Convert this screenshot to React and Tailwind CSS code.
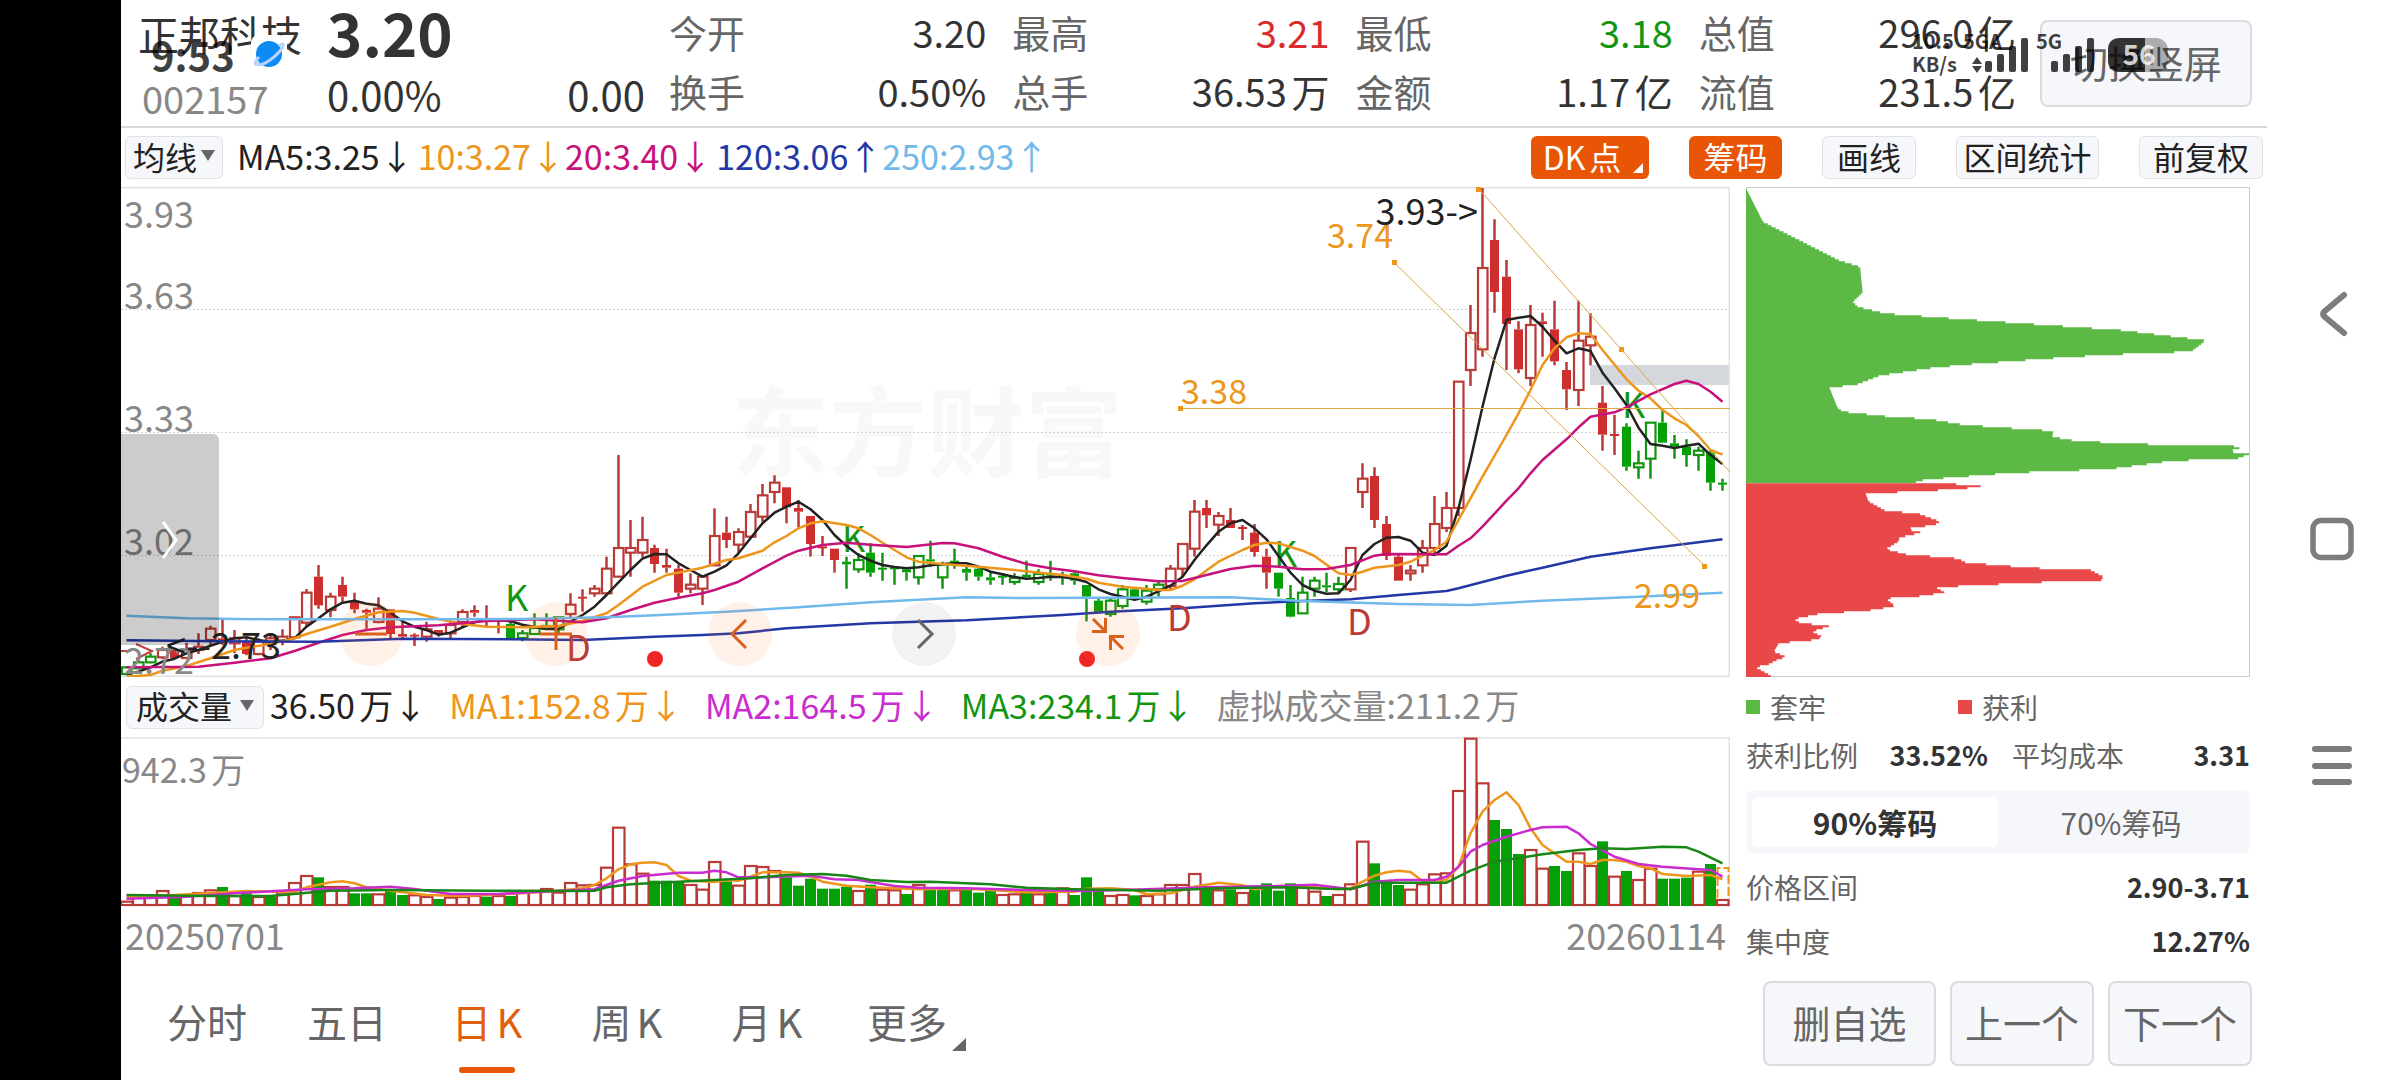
import React from "react";

const STEP = 12;
const FIRST = 5.5;
const cx = (i) => FIRST + STEP * i;

/* Candles: kind, high, body top, body bottom, low (thirds of a unit). r/g hollow, R/G filled. */
const CANDLES = `g 742 742 762 762,g 720 727 745 745,g 700 710 727 730,r 680 690 712 718,R 690 690 714 714,r 668 690 714 716,r 640 680 690 702,r 617 626 660 680,R 600 655 665 675,r 630 655 670 700,R 655 665 702 706,r 655 665 702 706,r 640 655 672 690,r 628 650 662 676,r 592 592 652 652,r 507 518 608 620,R 435 470 556 566,r 518 530 570 592,R 470 495 530 545,R 518 545 568 580,R 566 570 578 626,r 532 566 606 610,R 568 568 642 655,R 600 642 650 660,R 640 644 648 678,r 605 628 650 665,R 630 630 642 650,r 605 615 640 656,r 568 576 606 622,R 556 570 578 590,R 556 600 606 618,R 600 600 606 640,G 605 612 654 656,g 630 640 654 664,g 580 624 642 642,g 580 618 626 626,g 592 592 628 640,r 520 554 582 592,R 508 530 534 575,r 495 506 520 530,r 410 446 520 520,r 105 384 470 470,r 300 384 398 470,r 290 360 398 412,R 374 384 432 458,R 386 435 443 458,R 435 446 518 530,r 460 494 506 520,r 470 470 506 555,r 265 348 436 436,R 290 338 360 384,r 325 336 374 400,r 252 276 350 350,r 192 226 290 305,r 166 188 216 250,R 202 202 262 310,R 240 264 275 322,R 288 288 372 410,R 348 379 384 408,R 386 386 420 458,G 410 425 433 506,g 400 420 448 458,G 370 398 458 470,G 398 443 448 482,G 440 442 446 494,G 448 448 457 482,g 408 408 472 494,G 362 418 424 440,g 425 434 472 506,G 386 422 428 446,G 440 447 458 482,G 440 446 470 482,G 455 472 481 494,G 460 467 472 494,g 460 474 486 494,G 422 464 472 472,g 448 462 486 494,G 422 461 466 482,G 455 466 470 494,G 455 460 482 494,G 495 495 530 604,G 535 542 576 580,g 535 542 582 590,g 495 508 558 566,G 505 508 532 540,g 495 512 545 554,g 485 494 508 530,r 435 446 498 510,r 370 372 446 470,r 240 275 386 410,R 240 264 286 324,r 276 288 314 348,R 264 300 324 324,R 315 321 326 360,R 312 338 396 410,R 386 410 458 506,G 458 458 506 530,G 495 534 590 592,g 470 518 580 580,g 470 482 506 530,G 458 496 502 516,g 470 492 508 520,r 384 384 508 516,r 130 176 216 264,R 142 168 300 324,R 288 312 408 420,R 400 410 482 482,r 435 452 460 482,r 360 384 436 458,r 228 312 384 400,r 216 264 324 336,r -115 -115 264 288,r -345 -261 -150 -102,r -696 -456 -212 -190,R -602 -540 -384 -322,R -480 -430 -288 -150,R -296 -272 -152 -140,r -345 -285 -126 -102,R -322 -296 -288 -190,R -358 -272 -176 -164,R -174 -150 -92 -30,r -358 -238 -90 -42,r -320 -250 -224 -164,R -102 -52 44 92,R -16 42 46 105,G 10 20 140 152,g 92 130 142 176,g 8 8 116 176,G -28 8 68 68,G 45 70 80 116,G 58 80 105 140,g 80 92 105 152,G 90 98 188 212,G 176 188 193 212`
  .split(",")
  .map((s) => {
    const [kind, ...v] = s.split(" ");
    return [kind, ...v.map((n) => 233 + Number(n) / 3)];
  });

const MA_LINES = [
  ["#222222", "0 762 1 755 2 742 3 725 4 716 5 700 6 690 7 677 8 665 9 655 10 652 11 660 12 666 13 662 14 655 15 620 16 595 17 568 18 548 19 542 20 551 21 556 22 578 23 604 24 620 25 630 26 644 27 638 28 622 29 607 30 600 31 600 32 604 33 614 34 621 35 627 36 627 37 605 38 585 39 560 40 525 41 487 42 450 43 416 44 402 45 403 46 430 47 450 48 470 49 455 50 436 51 400 52 355 53 310 54 278 55 260 56 245 57 268 58 300 59 345 60 378 61 405 62 422 63 435 64 441 65 445 66 442 67 436 68 432 69 430 70 430 71 440 72 455 73 463 74 471 75 476 76 474 77 470 78 471 79 476 80 486 81 508 82 522 83 530 84 539 85 530 86 514 87 497 88 470 89 420 90 376 91 335 92 310 93 300 94 325 95 358 96 408 97 458 98 495 99 512 100 521 101 520 102 480 103 405 104 372 105 353 106 351 107 362 108 398 109 405 110 377 111 265 112 120 113 -40 114 -185 115 -300 116 -307 117 -312 118 -280 119 -238 120 -200 121 -215 122 -207 123 -142 124 -95 125 -45 126 23 127 72 128 77 129 84 130 77 131 71 132 105 133 132"],
  ["#ed961b", "0 770 2 765 3 752 5 738 7 715 9 690 10 683 12 672 14 655 15 642 17 620 19 597 21 577 23 573 24 578 26 597 28 612 30 620 33 622 36 618 38 603 40 580 41 555 43 500 45 465 48 443 50 420 51 415 53 392 54 367 55 348 56 325 57 310 58 304 60 315 61 325 62 345 63 368 65 412 66 425 68 432 71 440 74 450 78 465 80 476 81 488 83 500 86 510 87 510 88 497 89 478 91 425 93 390 94 375 95 368 96 370 98 392 99 408 101 460 102 465 103 455 104 443 106 435 107 425 109 390 110 365 111 300 112 235 113 170 115 45 116 -20 117 -90 118 -165 119 -215 120 -248 121 -260 122 -258 123 -210 125 -122 126 -88 127 -65 128 -30 129 -5 130 15 131 48 132 90 133 104"],
  ["#c7127c", "0 742 6 740 9 728 12 715 14 693 16 668 18 645 20 630 22 622 26 616 30 603 34 598 38 607 40 595 42 570 44 548 46 533 48 520 49 510 51 485 53 445 55 407 56 392 58 375 60 368 62 374 65 381 68 369 69 370 71 385 73 410 75 432 77 445 79 454 81 466 83 474 86 484 88 483 90 465 92 447 94 437 96 440 98 448 100 447 102 435 104 407 105 402 110 403 111 377 112 355 113 320 115 242 116 205 117 160 118 120 120 58 121 22 122 -10 124 -23 125 -38 127 -77 129 -108 130 -118 131 -108 132 -85 133 -55"],
  ["#2338a5", "0 661 8 664 16 665 23 656 32 658 38 660 44 650 48 645 51 640 55 625 62 610 70 601 78 585 82 575 88 565 94 550 98 543 102 538 106 525 110 513 111 505 115 467 118 443 122 410 127 385 133 358"],
  ["#70b9ea", "0 587 5 595 12 598 25 598 33 597 40 592 44 586 50 575 56 562 62 547 70 532 75 534 92 532 98 543 106 552 112 555 118 542 126 530 133 518"],
];

const VOLUMES =
  "r662 r643 r648 r630 G650 r645 r636 r628 G621 r645 G640 r648 G650 r635 r606 r585 G592 r618 r618 G640 G640 r640 G630 G645 r643 r648 G657 r650 r648 r645 G650 r645 G648 r635 r630 r624 r635 r606 r613 r612 r560 r440 r550 r578 G602 G602 G606 r612 r626 r543 G604 r614 r555 r558 r570 G592 G617 G596 G626 G626 G620 r630 G614 r626 r628 G642 r612 G626 G622 r628 G628 G638 G632 r642 r640 G635 r640 G638 r622 G645 G592 G630 r645 r642 G646 r645 r640 r612 r612 r579 G618 r628 G628 r636 G628 G610 G632 G610 r613 r632 G648 r642 r610 r482 G550 G610 G615 r626 r610 r580 r577 r330 r173 r307 G420 G447 G522 r507 r563 G558 G573 r517 r555 G484 r587 G573 r597 r563 G596 G596 G593 r572 G552 r657"
    .split(" ")
    .map((s) => [s[0], Number(s.slice(1)) / 3 - 57]);

const VOL_LINES = [
  ["#ed961b", "0 650 4 645 10 633 14 636 15 622 17 607 18 604 19 610 20 622 22 632 25 645 28 648 33 640 36 632 38 625 39 615 40 595 41 568 42 553 43 548 44 547 45 555 46 588 47 602 49 606 50 600 51 602 52 590 53 577 55 577 56 578 57 590 58 605 60 617 62 622 66 628 68 626 71 628 75 637 79 635 80 626 82 625 84 630 85 643 87 640 89 620 91 608 93 616 94 628 96 618 99 622 101 628 102 625 103 605 104 587 105 577 106 572 107 576 108 603 110 600 111 560 112 460 113 395 114 360 115 337 116 375 117 445 118 495 120 545 121 545 122 552 123 540 124 540 125 545 126 558 127 565 128 582 130 588 132 585 133 598"],
  ["#c92ccf", "0 656 5 650 9 640 15 628 19 625 22 620 24 627 27 642 31 642 34 636 39 628 40 615 41 602 43 588 46 578 48 578 49 572 50 577 51 592 53 592 57 587 59 598 61 600 64 618 66 623 70 625 75 630 80 633 85 628 90 622 96 618 99 614 102 628 104 605 106 600 109 600 110 590 111 560 112 515 113 495 115 470 117 450 118 442 120 440 121 460 122 492 124 530 126 552 128 560 131 568 132 570 133 590"],
  ["#178717", "0 645 7 648 12 648 17 632 22 630 30 632 38 633 39 632 40 622 42 613 46 605 49 600 52 595 55 585 58 582 60 587 62 600 65 606 67 605 72 613 75 623 79 628 86 632 91 625 97 622 100 626 102 627 104 608 110 608 112 572 114 545 118 523 121 510 123 505 125 507 128 500 130 502 131 515 133 550"],
];

const linePoints = (s, base) => {
  const n = s.split(" ").map(Number);
  const out = [];
  for (let k = 0; k < n.length; k += 2) out.push(`${cx(n[k])},${(base + n[k + 1] / 3).toFixed(1)}`);
  return out.join(" ");
};

/* Cost distribution outline: x y pairs in source units */
const TRAPPED = "38 22 78 123 255 238 305 258 311 335 288 363 300 378 365 398 512 412 734 432 915 448 1110 478 1108 485 1080 512 880 522 745 533 575 549 480 560 352 584 295 612 264 616 233 619 252 680 264 692 370 707 470 715 547 732 705 746 757 750 755 768 800 778 912 788 1180 796 1195 803 1163 812 1217 819 1190 832 1035 840 905 862 818 868 662 876 508 891 420 902 475 909";
const PROFIT = "530 910 587 914 587 919 525 925 462 930 392 934 318 938 325 962 362 988 445 1000 492 1022 480 1032 412 1044 449 1055 397 1070 395 1082 365 1105 412 1120 535 1133 552 1145 705 1161 845 1168 875 1188 868 1200 695 1205 562 1215 480 1218 502 1234 455 1245 365 1253 387 1275 340 1287 205 1300 150 1315 165 1326 232 1336 193 1352 214 1366 208 1376 115 1387 103 1412 132 1428 105 1440 95 1449 60 1459 90 1480 103 1492";

const steppedArea = (s) => {
  const n = s.split(" ").map(Number);
  const p = [];
  for (let k = 0; k < n.length; k += 2) p.push([(n[k] - 38) / 2.34, n[k + 1] / 3 - 7]);
  const end = p[p.length - 1][1];
  let d = `M0,${p[0][1]}`;
  let k = 0;
  for (let y = p[0][1]; y < end; y += 2) {
    while (k < p.length - 2 && p[k + 1][1] < y) k++;
    const [x0, y0] = p[k];
    const [x1, y1] = p[k + 1];
    const t = Math.min(1, Math.max(0, (y - y0) / (y1 - y0)));
    d += `H${(x0 + (x1 - x0) * t).toFixed(1)}V${Math.min(y + 2, end).toFixed(1)}`;
  }
  return d + "H0Z";
};

const RED = "#b93a37";
const GREEN = "#129612";

function PriceChart() {
  return (
    <svg viewBox="0 0 1609 490" className="block h-auto w-full" role="img" aria-label="日K线图">
      <text x="610" y="282" fontSize="98" fontWeight="700" fill="#f8f8f8">东方财富</text>
      {[122.5, 245.5, 368.5].map((y) => (
        <line key={y} x1="0" x2="1609" y1={y} y2={y} stroke="#d4d4d4" strokeWidth="1" strokeDasharray="2 2" />
      ))}
      <rect x="1469" y="178" width="139" height="20" fill="#d4d8dd" />
      <path d="M0 0.5H1608.5V490M0 489.5H1609" fill="none" stroke="#e2e2e2" strokeWidth="2" />
      <path d="M0 464H10M15 457L31 464L15 472" fill="none" stroke="#c2403d" strokeWidth="2" />
      {CANDLES.map(([kind, hi, top, bot, lo], i) => {
        const red = kind.toLowerCase() === "r";
        const hollow = kind === "r" || kind === "g";
        const line = red ? RED : "#129612";
        return (
          <g key={i}>
            <path d={`M${cx(i)} ${hi}V${top}M${cx(i)} ${bot}V${lo}`} stroke={line} strokeWidth="2.5" />
            {hollow ? (
              <rect x={cx(i) - 4.5} y={top} width="9.5" height={bot - top} fill="#fff" stroke={line} strokeWidth="2.2" />
            ) : (
              <rect x={cx(i) - 4.5} y={top} width="9" height={Math.max(2, bot - top)} fill={red ? "#cf2e2e" : "#05a005"} />
            )}
          </g>
        );
      })}
      <g fontSize="36" fill={GREEN}>
        <text x="384" y="424">K</text>
        <text x="721" y="365">K</text>
        <text x="1153" y="380">K</text>
        <text x="1501" y="231">K</text>
      </g>
      {MA_LINES.map(([c, s]) => (
        <polyline key={c} points={linePoints(s, 233)} fill="none" stroke={c} strokeWidth="2.5" strokeLinejoin="round" />
      ))}
      <g fontSize="36" fill="#888888">
        <text x="3" y="41">3.93</text>
        <text x="3" y="122">3.63</text>
        <text x="3" y="245">3.33</text>
        <text x="3" y="368">3.02</text>
        <text x="3" y="487">2.72</text>
      </g>
      <g fontSize="36" fill={RED}>
        <text x="445" y="474">D</text>
        <text x="1046" y="444">D</text>
        <text x="1226" y="448">D</text>
      </g>
      <path d="M1059 221.5H1609M1357 1L1609 285M1273.500 76L1584 379" fill="none" stroke="#dda544" strokeWidth="1" />
      <g fill="#ed961b">
        <rect x="1057" y="219" width="5" height="5" />
        <rect x="1355" y="0" width="5" height="5" />
        <rect x="1498" y="160" width="5" height="5" />
        <rect x="1271" y="73" width="5" height="5" />
        <rect x="1581" y="377" width="5" height="5" />
      </g>
      <g fontSize="34" fill="#ed961b">
        <text x="1060" y="217">3.38</text>
        <text x="1206" y="61">3.74</text>
        <text x="1513" y="421">2.99</text>
      </g>
      <g fontSize="36" fill="#222222">
        <text x="1357" y="38" textAnchor="end">3.93-&gt;</text>
        <text x="160" y="472" textAnchor="end">&lt;--2.73</text>
      </g>
      <circle cx="534" cy="472" r="8" fill="#f02424" />
      <circle cx="966" cy="472" r="8" fill="#f02424" />
    </svg>
  );
}

function VolumeChart() {
  return (
    <svg viewBox="0 0 1609 170" className="block h-auto w-full" role="img" aria-label="成交量图">
      <path d="M0 0.5H1608.5V170" fill="none" stroke="#e2e2e2" strokeWidth="2" />
      <text x="1" y="46" fontSize="34" fill="#888888">942.3万</text>
      {VOLUMES.map(([kind, top], i) =>
        kind === "r" ? (
          <rect key={i} x={cx(i) - 5.5} y={top + 1} width="11.5" height={168 - top - 1} fill="#fff" stroke={RED} strokeWidth="2.2" />
        ) : (
          <rect key={i} x={cx(i) - 5.5} y={top} width="11" height={169 - top} fill="#05a005" />
        )
      )}
      <path d="M1596.500 161V131H1607.500V161" fill="none" stroke="#ed961b" strokeWidth="2" strokeDasharray="9 3" />
      {VOL_LINES.map(([c, s]) => (
        <polyline key={c} points={linePoints(s, -57)} fill="none" stroke={c} strokeWidth="2.5" strokeLinejoin="round" />
      ))}
    </svg>
  );
}

function ChipChart() {
  return (
    <svg viewBox="0 0 504 490" className="block h-auto w-full" role="img" aria-label="筹码分布">
      <rect x="0.5" y="0.5" width="503" height="489" fill="none" stroke="#cccccc" />
      <path d={steppedArea(TRAPPED)} fill="#5cb946" />
      <path d={steppedArea(PROFIT)} fill="#e84848" />
    </svg>
  );
}

const Down = ({ className }) => (
  <svg viewBox="0 0 14 11" className={className} aria-hidden="true">
    <path d="M0 0H14L7 11Z" fill="#666" />
  </svg>
);

const STATS = [
  [["今开", "3.20", "text-[#333]"], ["换手", "0.50%", "text-[#333]"]],
  [["最高", "3.21", "text-[#d92b2b]"], ["总手", "36.53万", "text-[#333]"]],
  [["最低", "3.18", "text-[#129612]"], ["金额", "1.17亿", "text-[#333]"]],
  [["总值", "296.0亿", "text-[#333]"], ["流值", "231.5亿", "text-[#333]"]],
];

function StatusBar() {
  return (
    <>
      <div className="pointer-events-none absolute top-[32px] left-[30px] flex items-center gap-4 text-black/75">
        <span className="text-[40px] leading-[44px] font-bold">9:53</span>
        <svg viewBox="0 0 36 38" className="h-[38px] w-9" aria-hidden="true">
          <rect width="36" height="38" rx="8" fill="#fff" />
          <circle cx="18" cy="19" r="13" fill="#0d8bf5" />
          <path d="M8 28C3 32 3 27 8 22M28 11C33 6 34 10 29 16C24 22 14 30 7 30" fill="none" stroke="#b9d4fb" strokeWidth="3" />
        </svg>
      </div>
      <div className="pointer-events-none absolute top-[28px] right-[98px] h-[50px] w-[258px] text-black/75">
        <svg viewBox="0 0 258 50" className="h-full w-full" aria-label="网络与电量" role="img">
          <g fill="#000" fillOpacity="0.75" fontWeight="700" fontSize="20">
            <text x="1" y="21">10.5</text>
            <text x="1" y="44">KB/s</text>
            <text x="52" y="21">5GA</text>
            <text x="125" y="21">5G</text>
          </g>
          <g fill="#000" fillOpacity="0.75">
            <path d="M61 36L66 29L71 36ZM61 38L66 45L71 38Z" />
            <rect x="74" y="33" width="7" height="11" rx="2" />
            <rect x="86" y="26" width="7" height="18" rx="2" />
            <rect x="98" y="18" width="7" height="26" rx="2" />
            <rect x="110" y="10" width="7" height="34" rx="2" />
            <rect x="140" y="33" width="7" height="11" rx="2" />
            <rect x="152" y="26" width="7" height="18" rx="2" />
            <rect x="164" y="18" width="7" height="26" rx="2" />
            <rect x="176" y="10" width="7" height="34" rx="2" />
          </g>
          <rect x="197" y="10" width="60" height="34" rx="12" fill="#000" fillOpacity="0.3" />
          <path d="M209 10H234V44H209Q197 44 197 32V22Q197 10 209 10Z" fill="#000" fillOpacity="0.7" />
          <text x="228" y="37" fontSize="28" fontWeight="700" fill="#fff" fillOpacity="0.8" textAnchor="middle">56</text>
        </svg>
      </div>
    </>
  );
}

function Header() {
  return (
    <header className="relative flex h-32 border-b-2 border-[#d9d9d9] pr-[15px] pl-[17px]">
      <div className="w-[189px] shrink-0">
        <div className="text-[41px] leading-[66px] text-[#333]">正邦科技</div>
        <div className="pl-1 text-[38px] leading-[64px] text-[#888]">002157</div>
      </div>
      <div className="w-[318px] shrink-0 text-[#333]">
        <div className="text-[60px] leading-[62px] font-bold">3.20</div>
        <div className="flex justify-between text-[40px] leading-[64px]">
          <span>0.00%</span>
          <span>0.00</span>
        </div>
      </div>
      <dl className="mx-6 grid flex-1 grid-cols-4 gap-x-[26px] pt-0.5 text-[38px] leading-[59px]">
        {STATS.map((col) => (
          <div key={col[0][0]}>
            {col.map(([k, v, c]) => (
              <div key={k} className="flex justify-between">
                <dt className="text-[#666]">{k}</dt>
                <dd className={c}>{v}</dd>
              </div>
            ))}
          </div>
        ))}
      </dl>
      <button type="button" className="mt-5 h-[87px] w-[212px] rounded-lg border-2 border-[#d8dbe0] bg-[#f6f7fa] pb-1 text-[38px] text-[#666]">
        切换竖屏
      </button>
      <StatusBar />
    </header>
  );
}

const PLAIN = "h-[43px] rounded-md border border-[#dfe2e6] bg-[#f6f7fa] pb-1 text-[32px] leading-[38px] text-[#222]";

function Toolbar() {
  return (
    <div className="flex h-[59px] items-center pr-1 pl-1">
      <button type="button" className={`${PLAIN} flex w-[98px] items-center justify-center gap-1`}>
        均线
        <Down className="h-[11px] w-[14px]" />
      </button>
      <div className="flex pb-1 pl-3.5 text-[34px] leading-[44px] whitespace-nowrap">
        <span className="pr-1 text-[#222]">MA5:3.25↓</span>
        <span className="text-[#ed961b]">10:3.27↓</span>
        <span className="pr-1 text-[#c7127c]">20:3.40↓</span>
        <span className="text-[#2338a5]">120:3.06↑</span>
        <span className="text-[#70b9ea]">250:2.93↑</span>
      </div>
      <div className="ml-auto flex gap-10">
        <button type="button" className="relative h-[43px] w-[118px] rounded-md bg-[#e85504] pr-4 pb-1 text-[32px] leading-[38px] text-white">
          DK点
          <svg viewBox="0 0 10 10" className="absolute right-1.5 bottom-1.5 h-2.5 w-2.5" aria-hidden="true">
            <path d="M10 0V10H0Z" fill="#fff" />
          </svg>
        </button>
        <button type="button" className="h-[43px] w-[93px] rounded-md bg-[#e85504] pb-1 text-[32px] leading-[38px] text-white">筹码</button>
        <button type="button" className={`${PLAIN} w-[94px]`}>画线</button>
        <button type="button" className={`${PLAIN} w-[143px]`}>区间统计</button>
        <button type="button" className={`${PLAIN} w-[124px]`}>前复权</button>
      </div>
    </div>
  );
}

const ROUND = "absolute bottom-[11px] flex size-16 items-center justify-center rounded-full";

function ChartControls() {
  const s = { fill: "none", stroke: "#d9601d", strokeWidth: 3 };
  return (
    <>
      <button type="button" aria-label="缩小" className={`${ROUND} left-[218px] bg-[#ff6a1a]/10`}>
        <svg viewBox="0 0 32 32" className="size-8" {...s}><path d="M0 16H32" /></svg>
      </button>
      <button type="button" aria-label="放大" className={`${ROUND} left-[403px] bg-[#ff6a1a]/10`}>
        <svg viewBox="0 0 32 32" className="size-8" {...s}><path d="M0 16H32M16 0V32" /></svg>
      </button>
      <button type="button" aria-label="左移" className={`${ROUND} left-[587px] bg-[#ff6a1a]/10`}>
        <svg viewBox="0 0 32 32" className="size-8" {...s}><path d="M22 2L8 16L22 30" /></svg>
      </button>
      <button type="button" aria-label="右移" className={`${ROUND} left-[771px] bg-black/5`}>
        <svg viewBox="0 0 32 32" className="size-8" fill="none" stroke="#666" strokeWidth="3"><path d="M10 2L24 16L10 30" /></svg>
      </button>
      <button type="button" aria-label="收起" className={`${ROUND} left-[955px] bg-[#ff6a1a]/10`}>
        <svg viewBox="0 0 32 32" className="size-8" {...s}><path d="M1 1L13 13M0 13.500H13.500V0M31 31L19 19M32 18.500H18.500V32" /></svg>
      </button>
      <button type="button" aria-label="展开侧栏" className="absolute top-[247px] left-0 flex h-[211px] w-[98px] items-center justify-center rounded-r-md bg-black/20">
        <svg viewBox="0 0 16 38" className="h-[38px] w-4" fill="none" stroke="#fff" strokeWidth="3"><path d="M1 1L14 19L1 37" /></svg>
      </button>
    </>
  );
}

function VolumeLegend() {
  return (
    <div className="flex h-[60px] items-center pl-[5px] whitespace-nowrap">
      <button type="button" className={`${PLAIN} flex w-[138px] items-center justify-center gap-2`}>
        成交量
        <Down className="h-[11px] w-[14px]" />
      </button>
      <div className="flex gap-[22px] pb-1 pl-1.5 text-[34px] leading-[44px]">
        <span className="text-[#222]">36.50万↓</span>
        <span className="text-[#ed961b]">MA1:152.8万↓</span>
        <span className="text-[#c92ccf]">MA2:164.5万↓</span>
        <span className="text-[#129612]">MA3:234.1万↓</span>
        <span className="text-[#888]">虚拟成交量:211.2万</span>
      </div>
    </div>
  );
}

function ChipPanel() {
  return (
    <section className="w-[504px] shrink-0 text-[28px] leading-[44px] text-[#666]">
      <ChipChart />
      <div className="grid h-14 grid-cols-[212px_1fr] items-center pt-1">
        <span className="flex items-center gap-2.5"><i className="size-3.5 bg-[#5cb946]" />套牢</span>
        <span className="flex items-center gap-2.5"><i className="size-3.5 bg-[#e84848]" />获利</span>
      </div>
      <div className="flex h-11 items-center">
        <span>获利比例</span>
        <b className="ml-auto text-[27px] text-[#333]">33.52%</b>
        <span className="ml-6">平均成本</span>
        <b className="w-[126px] text-right text-[27px] text-[#333]">3.31</b>
      </div>
      <div className="mt-3.5 grid h-[62px] grid-cols-2 rounded-md bg-[#f6f7fa] p-1.5 text-[30px]">
        <button type="button" className="rounded-md bg-white font-bold text-[#333]">90%筹码</button>
        <button type="button">70%筹码</button>
      </div>
      <div className="mt-2 flex h-13 items-center justify-between">
        <span>价格区间</span>
        <b className="text-[27px] text-[#333]">2.90-3.71</b>
      </div>
      <div className="flex h-14 items-center justify-between">
        <span>集中度</span>
        <b className="text-[27px] text-[#333]">12.27%</b>
      </div>
    </section>
  );
}

const TABS = ["分时", "五日", "日K", "周K", "月K", "更多"];
const FOOT = "h-[85px] rounded-lg border-2 border-[#d8dbe0] bg-[#f6f7fa] pb-1 text-[38px] text-[#666]";

function Footer() {
  return (
    <footer className="flex items-start justify-between pr-[15px] pl-4">
      <nav className="flex text-[40px]">
        {TABS.map((t) => (
          <button key={t} type="button" className={t === "日K" ? "relative h-[104px] w-[140px] text-[#e0600f]" : "relative h-[104px] w-[140px] text-[#666]"}>
            {t}
            {t === "日K" && <span className="absolute bottom-0 left-[42px] h-1.5 w-14 rounded-full bg-[#e85504]" />}
            {t === "更多" && (
              <svg viewBox="0 0 14 13" className="absolute right-[11px] bottom-[22px] h-[13px] w-[14px]" aria-hidden="true">
                <path d="M14 0V13H0Z" fill="#666" />
              </svg>
            )}
          </button>
        ))}
      </nav>
      <div className="flex gap-3.5 pt-3">
        <button type="button" className={`${FOOT} w-[173px]`}>删自选</button>
        <button type="button" className={`${FOOT} w-[144px]`}>上一个</button>
        <button type="button" className={`${FOOT} w-[144px]`}>下一个</button>
      </div>
    </footer>
  );
}

function SystemNav() {
  return (
    <nav className="flex w-[133px] shrink-0 flex-col items-center pt-[288px] pr-1">
      <button type="button" aria-label="返回" className="size-[50px]">
        <svg viewBox="0 0 50 50" className="size-full" fill="none" stroke="#7d7d7d" strokeWidth="6" strokeLinecap="round"><path d="M37 7L18 23Q14 26 18 29L37 45" /></svg>
      </button>
      <button type="button" aria-label="主页" className="mt-[176px] size-[50px]">
        <svg viewBox="0 0 50 50" className="size-full" fill="none" stroke="#7d7d7d" strokeWidth="5.5"><rect x="6" y="6.500" width="38" height="37" rx="8" /></svg>
      </button>
      <button type="button" aria-label="最近任务" className="mt-[176px] size-[50px]">
        <svg viewBox="0 0 50 50" className="size-full" fill="none" stroke="#7d7d7d" strokeWidth="6" strokeLinecap="round"><path d="M8 9H42M8 26H42M8 42H42" /></svg>
      </button>
    </nav>
  );
}

export default function App() {
  return (
    <div className="flex min-h-screen bg-white font-['Noto_Sans_CJK_SC',sans-serif] [text-autospace:normal]">
      <div className="w-[121px] shrink-0 bg-black" />
      <main className="min-w-0 flex-1">
        <Header />
        <Toolbar />
        <div className="flex gap-4 pr-[17px]">
          <section className="min-w-0 flex-1">
            <div className="relative">
              <PriceChart />
              <ChartControls />
            </div>
            <VolumeLegend />
            <VolumeChart />
            <div className="flex justify-between pr-1 pl-1 text-[36px] leading-[55px] text-[#888]">
              <span>20250701</span>
              <span>20260114</span>
            </div>
          </section>
          <ChipPanel />
        </div>
        <Footer />
      </main>
      <SystemNav />
    </div>
  );
}
